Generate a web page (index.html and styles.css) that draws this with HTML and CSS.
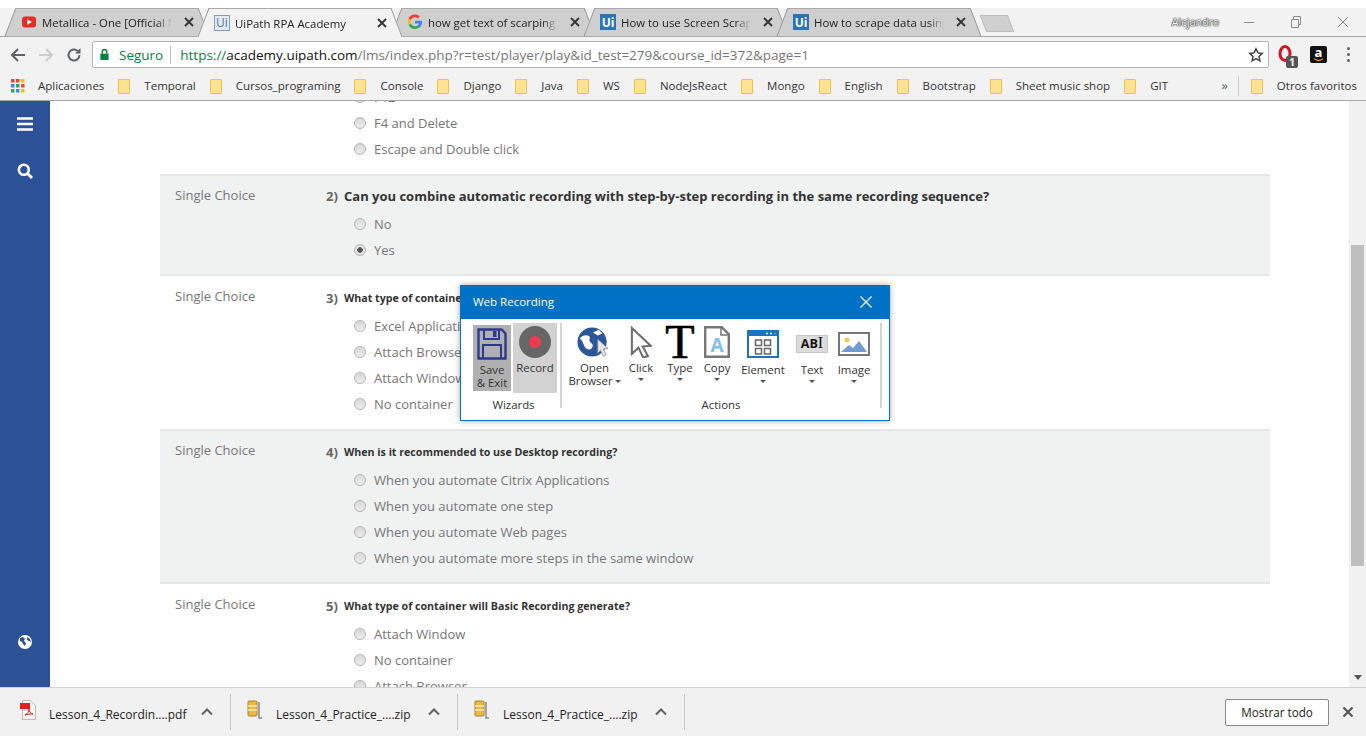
FILE: index.html
```html
<!DOCTYPE html>
<html lang="en">
<head>
  <meta charset="UTF-8" />
  <title>UiPath RPA Academy</title>
  <link rel="stylesheet" href="styles.css">
</head>
<body>

  <div class="tabstrip">
    <div class="tab">
      <svg class="tab-icon" viewBox="0 0 16 16"><rect x="1" y="2.500" width="14" height="11" rx="3" fill="#e52d27"/><path d="M6.300 5.300v5.400L11 8z" fill="#fff"/></svg>
      <span class="tab-title">Metallica - One [Official Music Video]</span>
      <svg class="tab-close" viewBox="0 0 10 10"><path d="M1 1l8 8M9 1l-8 8" stroke="#333" stroke-width="1.800" fill="none"/></svg>
    </div>
    <div class="tab tab-active">
      <span class="ui-icon ui-light">Ui</span>
      <span class="tab-title">UiPath RPA Academy</span>
      <svg class="tab-close" viewBox="0 0 10 10"><path d="M1 1l8 8M9 1l-8 8" stroke="#333" stroke-width="1.800" fill="none"/></svg>
    </div>
    <div class="tab">
      <svg class="tab-icon" viewBox="0 0 16 16"><path d="M15 8.200c0-.6 0-1-.1-1.500H8v2.800h4c-.2 1-.7 1.700-1.500 2.200l2.300 1.800C14.200 12.200 15 10.400 15 8.200z" fill="#4285f4"/><path d="M8 15c1.900 0 3.500-.6 4.800-1.700l-2.300-1.800c-.6.400-1.500.7-2.500.7-1.900 0-3.500-1.300-4.100-3L1.500 11C2.700 13.400 5.100 15 8 15z" fill="#34a853"/><path d="M3.900 9.200C3.700 8.700 3.600 8.100 3.600 7.600s.1-1 .3-1.500L1.500 4.300C1 5.300.8 6.400.8 7.600s.3 2.400.7 3.400z" fill="#fbbc05"/><path d="M8 3.300c1.100 0 2 .4 2.800 1.100l2-2C11.500 1.200 9.900.6 8 .6 5.100.6 2.700 2.100 1.500 4.300l2.400 1.800C4.500 4.500 6.100 3.300 8 3.300z" fill="#ea4335"/></svg>
      <span class="tab-title">how get text of scarping on UiPath</span>
      <svg class="tab-close" viewBox="0 0 10 10"><path d="M1 1l8 8M9 1l-8 8" stroke="#333" stroke-width="1.800" fill="none"/></svg>
    </div>
    <div class="tab">
      <span class="ui-icon">Ui</span>
      <span class="tab-title">How to use Screen Scraping in UiPath</span>
      <svg class="tab-close" viewBox="0 0 10 10"><path d="M1 1l8 8M9 1l-8 8" stroke="#333" stroke-width="1.800" fill="none"/></svg>
    </div>
    <div class="tab">
      <span class="ui-icon">Ui</span>
      <span class="tab-title">How to scrape data using UiPath Studio</span>
      <svg class="tab-close" viewBox="0 0 10 10"><path d="M1 1l8 8M9 1l-8 8" stroke="#333" stroke-width="1.800" fill="none"/></svg>
    </div>
    <div class="new-tab"></div>
    <div class="window-area">
      <span class="profile">Alejandro</span>
      <svg class="win-btn" viewBox="0 0 12 12"><path d="M1 6.500h10" stroke="#8c8c8c" fill="none"/></svg>
      <svg class="win-btn" viewBox="0 0 12 12"><path d="M1.500 3.500h7v8h-7zM3.500 3.500v-3h7v8h-2" stroke="#8c8c8c" fill="none"/></svg>
      <svg class="win-btn" viewBox="0 0 12 12"><path d="M1 1l10 10M11 1L1 11" stroke="#8c8c8c" fill="none"/></svg>
    </div>
  </div>

  <div class="toolbar">
    <svg class="nav-icon" viewBox="0 0 16 16"><path d="M15 8H2M8 2L2 8l6 6" stroke="#5f6368" stroke-width="2" fill="none"/></svg>
    <svg class="nav-icon" viewBox="0 0 16 16"><path d="M1 8h13M8 2l6 6-6 6" stroke="#cdcdcd" stroke-width="2" fill="none"/></svg>
    <svg class="nav-icon" viewBox="0 0 16 16"><path d="M13.500 8a5.500 5.500 0 1 1-1.600-3.900" stroke="#5f6368" stroke-width="2" fill="none"/><path d="M14.500 1v5.500H9z" fill="#5f6368"/></svg>
    <div class="omnibox">
      <svg class="lock" viewBox="0 0 12 14"><path d="M3.500 6V4a2.500 2.500 0 0 1 5 0v2" stroke="#0b8043" stroke-width="1.500" fill="none"/><rect x="1.500" y="6" width="9" height="7" fill="#0b8043"/></svg>
      <span class="secure">Seguro</span>
      <span class="url"><span class="url-scheme">https://</span><span class="url-host">academy.uipath.com</span>/lms/index.php?r=test/player/play&amp;id_test=279&amp;course_id=372&amp;page=1</span>
      <svg class="star" viewBox="0 0 16 16"><path d="M8 1.800l1.900 4.100 4.400.5-3.300 3 .9 4.400L8 11.600l-3.900 2.200.9-4.400-3.300-3 4.400-.5z" stroke="#444" stroke-width="1.500" fill="none"/></svg>
    </div>
    <div class="ext ext-opera">
      <svg viewBox="0 0 18 20"><ellipse cx="8" cy="8.500" rx="5" ry="7" stroke="#d9121f" stroke-width="3" fill="none"/></svg>
      <span class="ext-badge">1</span>
    </div>
    <div class="ext-amazon"><span>a</span><svg viewBox="0 0 12 4"><path d="M1 .5c3 2.500 7 2.500 10 0" stroke="#f90" stroke-width="1.300" fill="none"/></svg></div>
    <div class="menu-dots"><i></i><i></i><i></i></div>
  </div>

  <div class="bookmarks">
    <div class="bm bm-apps">
      <svg class="apps-icon" viewBox="0 0 14 14">
        <rect x="0" y="0" width="3.500" height="3.500" fill="#e8453c"/><rect x="5" y="0" width="3.500" height="3.500" fill="#e8453c"/><rect x="10" y="0" width="3.500" height="3.500" fill="#fbbc05"/>
        <rect x="0" y="5" width="3.500" height="3.500" fill="#4285f4"/><rect x="5" y="5" width="3.500" height="3.500" fill="#34a853"/><rect x="10" y="5" width="3.500" height="3.500" fill="#e8453c"/>
        <rect x="0" y="10" width="3.500" height="3.500" fill="#34a853"/><rect x="5" y="10" width="3.500" height="3.500" fill="#4285f4"/><rect x="10" y="10" width="3.500" height="3.500" fill="#fbbc05"/>
      </svg>
      Aplicaciones
    </div>
    <div class="bm"><i class="folder"></i>Temporal</div>
    <div class="bm"><i class="folder"></i>Cursos_programing</div>
    <div class="bm"><i class="folder"></i>Console</div>
    <div class="bm"><i class="folder"></i>Django</div>
    <div class="bm"><i class="folder"></i>Java</div>
    <div class="bm"><i class="folder"></i>WS</div>
    <div class="bm"><i class="folder"></i>NodeJsReact</div>
    <div class="bm"><i class="folder"></i>Mongo</div>
    <div class="bm"><i class="folder"></i>English</div>
    <div class="bm"><i class="folder"></i>Bootstrap</div>
    <div class="bm"><i class="folder"></i>Sheet music shop</div>
    <div class="bm"><i class="folder"></i>GIT</div>
    <div class="bm-right">
      <span class="bm-more">»</span>
      <span class="bm-sep"></span>
      <div class="bm"><i class="folder"></i>Otros favoritos</div>
    </div>
  </div>

  <div class="page">
    <aside class="sidebar">
      <svg class="side-icon" viewBox="0 0 16 16"><path d="M0 2.500h16M0 8h16M0 13.500h16" stroke="#fff" stroke-width="2.400"/></svg>
      <svg class="side-icon side-search" viewBox="0 0 16 16"><circle cx="6.800" cy="6.800" r="5" stroke="#fff" stroke-width="2.600" fill="none"/><path d="M10.500 10.500L15 15" stroke="#fff" stroke-width="2.800"/></svg>
      <svg class="side-icon side-globe" viewBox="0 0 16 16"><circle cx="8" cy="8" r="7" fill="#fff"/><path d="M3 4l3-1 2 2-1 2 2 2-1 3-2-2-1-2-2-1zM10 3l3 2 1 3-2-1-2-1z" fill="#2c5197"/></svg>
    </aside>

    <main class="content">
      <div class="quiz">
        <section class="row row-first">
          <div></div>
          <div>
            <div class="opt"><i class="radio"></i>F12</div>
            <div class="opt"><i class="radio"></i>F4 and Delete</div>
            <div class="opt"><i class="radio"></i>Escape and Double click</div>
          </div>
        </section>

        <section class="row row-shaded row-two">
          <div class="q-type">Single Choice</div>
          <div>
            <div class="q-head"><span class="q-num">2)</span><span class="q-text">Can you combine automatic recording with step-by-step recording in the same recording sequence?</span></div>
            <div class="opt"><i class="radio"></i>No</div>
            <div class="opt"><i class="radio radio-on"></i>Yes</div>
          </div>
        </section>

        <section class="row">
          <div class="q-type">Single Choice</div>
          <div>
            <div class="q-head"><span class="q-num">3)</span><span class="q-text q-small">What type of container will Web Recording generate?</span></div>
            <div class="opt"><i class="radio"></i>Excel Application Scope</div>
            <div class="opt"><i class="radio"></i>Attach Browser</div>
            <div class="opt"><i class="radio"></i>Attach Window</div>
            <div class="opt"><i class="radio"></i>No container</div>
          </div>
        </section>

        <section class="row row-shaded row-four">
          <div class="q-type">Single Choice</div>
          <div>
            <div class="q-head"><span class="q-num">4)</span><span class="q-text q-small">When is it recommended to use Desktop recording?</span></div>
            <div class="opt"><i class="radio"></i>When you automate Citrix Applications</div>
            <div class="opt"><i class="radio"></i>When you automate one step</div>
            <div class="opt"><i class="radio"></i>When you automate Web pages</div>
            <div class="opt"><i class="radio"></i>When you automate more steps in the same window</div>
          </div>
        </section>

        <section class="row">
          <div class="q-type">Single Choice</div>
          <div>
            <div class="q-head"><span class="q-num">5)</span><span class="q-text q-small">What type of container will Basic Recording generate?</span></div>
            <div class="opt"><i class="radio"></i>Attach Window</div>
            <div class="opt"><i class="radio"></i>No container</div>
            <div class="opt"><i class="radio"></i>Attach Browser</div>
          </div>
        </section>
      </div>
    </main>

    <div class="scrollbar">
      <div class="scroll-up"></div>
      <div class="scroll-thumb"></div>
      <div class="scroll-down"></div>
    </div>

    <div class="recorder">
      <div class="recorder-title">
        <span>Web Recording</span>
        <svg class="recorder-close" viewBox="0 0 12 12"><path d="M.5.500l11 11M11.500.500l-11 11" stroke="#fff" stroke-width="1.200" fill="none"/></svg>
      </div>
      <div class="ribbon">
        <div class="group group-wizards">
          <div class="tools">
            <div class="wiz wiz-save">
              <svg class="wiz-icon" viewBox="0 0 30 32"><path d="M1.500 1.500h23l4 4v25h-27z" fill="#b0b0b0" stroke="#2b3a8f" stroke-width="2.400"/><path d="M7 2v9h15V2" fill="none" stroke="#2b3a8f" stroke-width="2"/><rect x="16" y="3" width="3.500" height="6" fill="#2b3a8f"/><path d="M6 30V17h18v13" fill="none" stroke="#2b3a8f" stroke-width="2"/></svg>
              <span class="wiz-label">Save<br>&amp; Exit</span>
            </div>
            <div class="wiz wiz-record">
              <svg class="rec-icon" viewBox="0 0 32 32"><circle cx="16" cy="16" r="16" fill="#666"/><circle cx="16" cy="16" r="6" fill="#ee3b52"/></svg>
              <span class="wiz-label">Record</span>
            </div>
          </div>
          <div class="group-label">Wizards</div>
        </div>
        <div class="group group-actions">
          <div class="tools">
            <div class="tool tool-open">
              <svg class="tool-icon" viewBox="0 0 34 34"><circle cx="16" cy="17" r="15.500" fill="#2b579a"/><path d="M3 13c3-3 7-4 10-2 2 2-1 4 1 6s4 3 2 6-5 2-7 0-2-6-6-10zM17 7l6-3 4 4-5 2z" fill="#fff"/><path d="M22 14l11 10-5 .5 3 6-3 1.500-3-6-3 3z" fill="#e4e4e4" stroke="#888" stroke-width=".8"/></svg>
              <span class="tool-label tool-label-nowrap">Open<br>Browser<i class="caret caret-inline"></i></span>
            </div>
            <div class="tool tool-click">
              <svg class="tool-icon" viewBox="0 0 24 34"><path d="M2 2l20 19-8.500.8L19 32l-5 1.500-5-10.500-7 6.500z" fill="#fff" stroke="#6f6f6f" stroke-width="2.200"/></svg>
              <span class="tool-label">Click</span>
              <i class="caret"></i>
            </div>
            <div class="tool tool-type">
              <span class="type-glyph">T</span>
              <span class="tool-label">Type</span>
              <i class="caret"></i>
            </div>
            <div class="tool tool-copy">
              <svg class="tool-icon" viewBox="0 0 26 32"><path d="M1.200 1.200h16.600l7 7v22.600H1.200z" fill="#fff" stroke="#777" stroke-width="2.400"/><path d="M17 1.500V9h7.500" fill="none" stroke="#777" stroke-width="1.500"/><text x="13" y="26" text-anchor="middle" class="copy-letter">A</text></svg>
              <span class="tool-label">Copy</span>
              <i class="caret"></i>
            </div>
            <div class="tool tool-element">
              <svg class="tool-icon" viewBox="0 0 32 28"><rect x="1" y="1" width="30" height="26" fill="#fff" stroke="#1b75bb" stroke-width="2"/><rect x="1" y="1" width="30" height="5" fill="#1b75bb"/><circle cx="20" cy="3.500" r="1" fill="#fff"/><circle cx="24" cy="3.500" r="1" fill="#fff"/><circle cx="28" cy="3.500" r="1" fill="#ee6b7d"/><path d="M8.500 10h6v5.500h-6zM17.500 10h6v5.500h-6zM8.500 18.500h6V24h-6zM17.500 18.500h6V24h-6z" fill="none" stroke="#666" stroke-width="1.500"/></svg>
              <span class="tool-label tool-label-low">Element</span>
              <i class="caret"></i>
            </div>
            <div class="tool tool-text">
              <div class="text-box">AB<span class="ibeam">I</span></div>
              <span class="tool-label tool-label-low">Text</span>
              <i class="caret"></i>
            </div>
            <div class="tool tool-image">
              <svg class="tool-icon" viewBox="0 0 32 24"><rect x="1" y="1" width="30" height="22" fill="#fff" stroke="#777" stroke-width="2"/><circle cx="9" cy="8" r="2.500" fill="#f2c94c"/><path d="M3 20l8-7 4 3 6-7 8 11z" fill="#6f9bd1"/></svg>
              <span class="tool-label tool-label-low">Image</span>
              <i class="caret"></i>
            </div>
          </div>
          <div class="group-label">Actions</div>
        </div>
      </div>
    </div>
  </div>

  <footer class="downloads">
    <div class="dl dl-first">
      <svg class="dl-icon" viewBox="0 0 16 20"><path d="M2.500.500h8l5 5v14h-13z" fill="#f4f4f4" stroke="#bbb"/><rect y="3" width="10" height="6" fill="#e2231a"/><path d="M5 15c3-1 4-4 4-6 0 3 2 5 4 5-3 0-5 0-8 1z" fill="none" stroke="#e2231a"/></svg>
      <span class="dl-name">Lesson_4_Recordin....pdf</span>
      <svg class="dl-caret" viewBox="0 0 12 8"><path d="M1 6.500l5-5 5 5" stroke="#5f6368" stroke-width="2" fill="none"/></svg>
    </div>
    <div class="dl">
      <svg class="dl-icon" viewBox="0 0 16 20"><rect x="1" y="1" width="9" height="15" rx="1" fill="#e7b93c" stroke="#a8862c"/><path d="M1 6h9M1 10h9" stroke="#fff"/><path d="M12 2v16h3" stroke="#888" stroke-width="1.500" fill="none"/></svg>
      <span class="dl-name">Lesson_4_Practice_....zip</span>
      <svg class="dl-caret" viewBox="0 0 12 8"><path d="M1 6.500l5-5 5 5" stroke="#5f6368" stroke-width="2" fill="none"/></svg>
    </div>
    <div class="dl">
      <svg class="dl-icon" viewBox="0 0 16 20"><rect x="1" y="1" width="9" height="15" rx="1" fill="#e7b93c" stroke="#a8862c"/><path d="M1 6h9M1 10h9" stroke="#fff"/><path d="M12 2v16h3" stroke="#888" stroke-width="1.500" fill="none"/></svg>
      <span class="dl-name">Lesson_4_Practice_....zip</span>
      <svg class="dl-caret" viewBox="0 0 12 8"><path d="M1 6.500l5-5 5 5" stroke="#5f6368" stroke-width="2" fill="none"/></svg>
    </div>
    <button class="show-all">Mostrar todo</button>
    <svg class="dl-close" viewBox="0 0 12 12"><path d="M1.500 1.500l9 9M10.500 1.500l-9 9" stroke="#555" stroke-width="2.200" fill="none"/></svg>
  </footer>

</body>
</html>
```

FILE: styles.css
```css
:root {
  --chrome: #f2f2f2;
  --tab: #cfcfcf;
  --chrome-line: #a9a9a9;
  --sidebar: #2c5197;
  --shaded: #f0f2f2;
  --row-line: #e6e8e8;
  --opt-text: #767676;
  --uipath-blue: #0072c6;
}

* {
  box-sizing: border-box;
}

body {
  margin: 0;
  height: 736px;
  overflow: hidden;
  display: flex;
  flex-direction: column;
  background: #fff;
  font-family: "Open Sans", sans-serif;
}

/* tabs */

.tabstrip {
  height: 29px;
  margin-top: 8px;
  flex: none;
  display: flex;
  padding-left: 5px;
  background: var(--chrome);
  border-bottom: 1px solid var(--chrome-line);
}

.tab {
  position: relative;
  width: 204px;
  height: 28px;
  margin-right: -11px;
  display: flex;
  align-items: center;
  padding-left: 16px;
  font-size: 11.4px;
  color: #222;
}

.tab::before,
.tab::after {
  content: "";
  position: absolute;
  top: 0;
  bottom: 0;
  width: 60%;
  background: var(--tab);
  border-top: 1px solid var(--chrome-line);
  z-index: 0;
}

.tab::before {
  left: 5px;
  border-left: 1px solid #9a9a9a;
  transform: skewX(-21deg);
}

.tab::after {
  right: 5px;
  border-right: 1px solid #9a9a9a;
  transform: skewX(21deg);
}

.tab > * {
  position: relative;
  z-index: 1;
}

.tab-active {
  z-index: 2;
  height: 29px;
}

.tab-active::before,
.tab-active::after {
  background: var(--chrome);
}

.tab-icon,
.ui-icon {
  width: 16px;
  height: 16px;
  flex: none;
}

.ui-icon {
  display: flex;
  align-items: center;
  justify-content: center;
  background: #2a75b8;
  color: #fff;
  font-size: 12px;
  font-weight: bold;
}

.ui-light {
  background: #e4ebf5;
  border: 1px solid #7d9cc8;
  color: #4b77b3;
  font-weight: normal;
}

.tab-title {
  width: 130px;
  margin-left: 5px;
  padding-top: 1px;
  white-space: nowrap;
  overflow: hidden;
  -webkit-mask-image: linear-gradient(to right, #000 88%, transparent);
  mask-image: linear-gradient(to right, #000 88%, transparent);
}

.tab-close {
  width: 10px;
  height: 10px;
  margin-left: 12px;
  flex: none;
}

.new-tab {
  width: 28px;
  height: 17px;
  margin: 7px 0 0 13px;
  background: var(--tab);
  border: 1px solid #bdbdbd;
  transform: skewX(21deg);
}

.window-area {
  margin-left: auto;
  height: 28px;
  display: flex;
  align-items: center;
}

.profile {
  font-size: 10.5px;
  color: #fff;
  text-shadow: 0 0 1px #222, 0 0 1px #222, 0 0 2px #444;
  margin-right: 24px;
}

.win-btn {
  width: 12px;
  height: 12px;
  margin-right: 35px;
}

.win-btn:last-child {
  margin-right: 17px;
}

/* address bar */

.toolbar {
  height: 35px;
  flex: none;
  display: flex;
  align-items: center;
  padding-left: 10px;
  background: var(--chrome);
}

.nav-icon {
  width: 16px;
  height: 16px;
  margin-right: 12px;
}

.omnibox {
  width: 1177px;
  height: 27px;
  margin-left: -2px;
  display: flex;
  align-items: center;
  padding: 0 4px 0 6px;
  background: #fff;
  border: 1px solid #b5b5b5;
  border-radius: 2px;
  font-size: 13.5px;
}

.lock {
  width: 11px;
  height: 13px;
  flex: none;
}

.secure {
  margin-left: 9px;
  padding-right: 7px;
  color: #0b8043;
  border-right: 1px solid #bbb;
}

.url {
  margin-left: 9px;
  color: #777;
  white-space: nowrap;
}

.url-scheme {
  color: #0b8043;
}

.url-host {
  color: #111;
}

.star {
  width: 16px;
  height: 16px;
  margin-left: auto;
}

.ext {
  position: relative;
  width: 18px;
  height: 20px;
  margin-left: 8px;
}

.ext-badge {
  position: absolute;
  right: -3px;
  bottom: -3px;
  width: 12px;
  height: 12px;
  background: #555;
  color: #fff;
  font-size: 10px;
  font-weight: bold;
  line-height: 12px;
  text-align: center;
  border-radius: 2px;
}

.ext-amazon {
  position: relative;
  width: 17px;
  height: 17px;
  margin-left: 15px;
  background: #111;
  border-radius: 2px;
  color: #fff;
  font-size: 13px;
  font-weight: bold;
  line-height: 13px;
  text-align: center;
}

.ext-amazon svg {
  position: absolute;
  left: 3px;
  bottom: 1px;
  width: 11px;
  height: 4px;
}

.menu-dots {
  margin-left: 20px;
  display: flex;
  flex-direction: column;
  gap: 3px;
}

.menu-dots i {
  width: 3px;
  height: 3px;
  background: #5f6368;
  border-radius: 50%;
}

/* bookmarks */

.bookmarks {
  height: 29px;
  flex: none;
  display: flex;
  align-items: center;
  padding: 0 0 2px 11px;
  background: var(--chrome);
  border-bottom: 1px solid var(--chrome-line);
  font-size: 11.5px;
  color: #333;
}

.bm {
  display: flex;
  align-items: center;
  white-space: nowrap;
  margin-right: 14px;
}

.apps-icon {
  width: 14px;
  height: 14px;
  margin: 2px 13px 0 0;
}

.folder {
  width: 12px;
  height: 15px;
  margin: 2px 14px 0 0;
  background: #fde293;
  border: 1px solid #f1c544;
  border-radius: 1px;
}

.bm-right {
  margin-left: auto;
  display: flex;
  align-items: center;
}

.bm-more {
  font-size: 13px;
  color: #666;
}

.bm-sep {
  width: 1px;
  height: 20px;
  margin: 2px 12px 0 10px;
  background: #ccc;
}

.bm-right .bm {
  margin-right: 9px;
}

/* page */

.page {
  position: relative;
  flex: 1;
  display: flex;
  min-height: 0;
}

.sidebar {
  position: relative;
  width: 50px;
  flex: none;
  background: var(--sidebar);
}

.side-icon {
  position: absolute;
  left: 17px;
  top: 15px;
  width: 16px;
  height: 16px;
}

.side-search {
  top: 62px;
}

.side-globe {
  top: 533px;
}

.content {
  flex: 1;
  min-width: 0;
  overflow: hidden;
}

.quiz {
  width: 1110px;
  margin: -17px 0 0 110px;
}

.row {
  display: grid;
  grid-template-columns: 166px 1fr;
  padding: 8px 0 12px;
  border-bottom: 2px solid var(--row-line);
}

.row-first {
  padding: 0 0 12px;
  background: #fff;
}

.row-shaded {
  background: var(--shaded);
}

.row-two {
  padding: 6px 0 11px;
}

.row-four {
  padding: 7px 0 11px;
}

.q-type {
  margin-top: -1px;
  padding-left: 15px;
  font-size: 13px;
  line-height: 26px;
  color: #777;
}

.row-two .q-type {
  margin-top: 0;
}

.q-head {
  height: 28px;
  margin-bottom: 1px;
  display: flex;
  align-items: center;
  font-weight: bold;
}

.q-num {
  width: 18px;
  font-size: 13px;
  color: #666;
}

.q-text {
  font-size: 13px;
  color: #333;
}

.q-small {
  font-size: 10.65px;
}

.opt {
  height: 26px;
  display: flex;
  align-items: center;
  padding-left: 28px;
  font-size: 13px;
  color: var(--opt-text);
}

.radio {
  width: 12px;
  height: 12px;
  margin-right: 8px;
  border: 1px solid #b4b4b4;
  border-radius: 50%;
  background: linear-gradient(#d8d8d8, #ececec);
}

.radio-on {
  background: radial-gradient(circle, #555 0 2.500px, #e2e2e2 3px);
}

/* scrollbar */

.scrollbar {
  width: 17px;
  flex: none;
  padding: 0 2px;
  background: #f1f1f1;
  display: flex;
  flex-direction: column;
}

.scroll-up {
  height: 144px;
}

.scroll-thumb {
  height: 321px;
  background: #bfbfbf;
}

.scroll-down {
  width: 0;
  height: 0;
  margin: 109px 0 0 3px;
  border-left: 4px solid transparent;
  border-right: 4px solid transparent;
  border-top: 5px solid #555;
}

/* web recording window */

.recorder {
  position: absolute;
  left: 460px;
  top: 184px;
  width: 430px;
  height: 136px;
  background: #fff;
  border: 1px solid var(--uipath-blue);
  box-shadow: 0 0 6px rgba(0, 0, 0, 0.35);
}

.recorder-title {
  height: 33px;
  display: flex;
  align-items: center;
  justify-content: space-between;
  padding: 0 17px 2px 12px;
  background: var(--uipath-blue);
  color: #fff;
  font-size: 11.5px;
}

.recorder-close {
  width: 12px;
  height: 12px;
}

.ribbon {
  display: flex;
  padding: 4px 0 0 12px;
  font-size: 11.4px;
  color: #333;
}

.group {
  border-right: 2px solid #d4d4d4;
  height: 85px;
}

.group-wizards {
  width: 89px;
}

.group-wizards .group-label {
  margin-right: 6px;
}

.group-actions {
  width: 320px;
  padding-left: 7px;
}

.group-actions .group-label {
  margin-left: -7px;
}

.tools {
  display: flex;
  height: 75px;
  align-items: flex-start;
}

.group-label {
  text-align: center;
  line-height: 14px;
}

.wiz {
  display: flex;
  flex-direction: column;
  align-items: center;
  line-height: 13px;
  text-align: center;
}

.wiz-save {
  width: 38px;
  height: 66px;
  margin-top: 2px;
  background: #b0b0b0;
  padding-top: 3px;
}

.wiz-record {
  width: 44px;
  height: 70px;
  margin-left: 2px;
  background: #d2d2d2;
  padding-top: 3px;
}

.wiz-icon {
  width: 30px;
  height: 32px;
  margin-bottom: 3px;
}

.rec-icon {
  width: 32px;
  height: 32px;
  margin-bottom: 3px;
}

.tool {
  display: flex;
  flex-direction: column;
  align-items: center;
  text-align: center;
  line-height: 13px;
}

.tool-open { width: 48px; padding-left: 3px; }
.tool-click { width: 48px; }
.tool-type { width: 30px; }
.tool-copy { width: 44px; }
.tool-element { width: 48px; }
.tool-text { width: 50px; }
.tool-image { width: 34px; }

.tool-label-nowrap {
  white-space: nowrap;
}

.tool-open .tool-icon {
  margin-left: -3px;
}

.tool-icon {
  height: 32px;
  margin-top: 3px;
  margin-bottom: 3px;
}

.tool-element .tool-icon {
  height: 28px;
  margin-top: 7px;
}

.tool-image .tool-icon {
  height: 24px;
  margin-top: 9px;
  margin-bottom: 5px;
}

.tool-label-low {
  margin-top: 2px;
}

.caret {
  width: 0;
  height: 0;
  margin-top: 4px;
  border-left: 3px solid transparent;
  border-right: 3px solid transparent;
  border-top: 3px solid #555;
}

.caret-inline {
  display: inline-block;
  margin: 0 0 2px 2px;
}

.type-glyph {
  height: 38px;
  font-family: "Liberation Serif", serif;
  font-size: 48px;
  line-height: 38px;
  color: #000;
  -webkit-text-stroke: 0.6px #000;
}

.copy-letter {
  fill: #7fbfe8;
  font-size: 19px;
  font-weight: bold;
}

.text-box {
  width: 32px;
  height: 18px;
  margin: 12px 0 8px;
  background: #dcdcdc;
  border: 1px solid #c4c4c4;
  color: #111;
  font-size: 12.5px;
  font-weight: bold;
  line-height: 16px;
}

.ibeam {
  font-family: "Liberation Serif", serif;
  font-size: 16px;
  font-weight: normal;
  line-height: 14px;
}

/* downloads */

.downloads {
  height: 49px;
  flex: none;
  display: flex;
  align-items: center;
  background: #f1f1f1;
  border-top: 1px solid #d2d2d2;
  font-size: 12px;
  color: #222;
}

.dl {
  width: 227px;
  height: 36px;
  display: flex;
  align-items: center;
  padding-left: 16px;
  border-right: 1px solid #c8c8c8;
}

.dl-first {
  width: 231px;
  padding-left: 20px;
}

.dl-icon {
  width: 16px;
  height: 20px;
  flex: none;
  margin: 0 13px 4px 0;
}

.dl-name {
  width: 140px;
  padding-top: 5px;
  white-space: nowrap;
}

.dl-caret {
  width: 12px;
  height: 8px;
  margin-left: 12px;
}

.show-all {
  width: 104px;
  height: 27px;
  margin-left: auto;
  padding: 0;
  background: #fff;
  border: 1px solid #8a8a8a;
  border-radius: 2px;
  font: 11.7px "Open Sans", sans-serif;
  color: #222;
}

.dl-close {
  width: 12px;
  height: 12px;
  margin: 0 12px 0 13px;
}
```
